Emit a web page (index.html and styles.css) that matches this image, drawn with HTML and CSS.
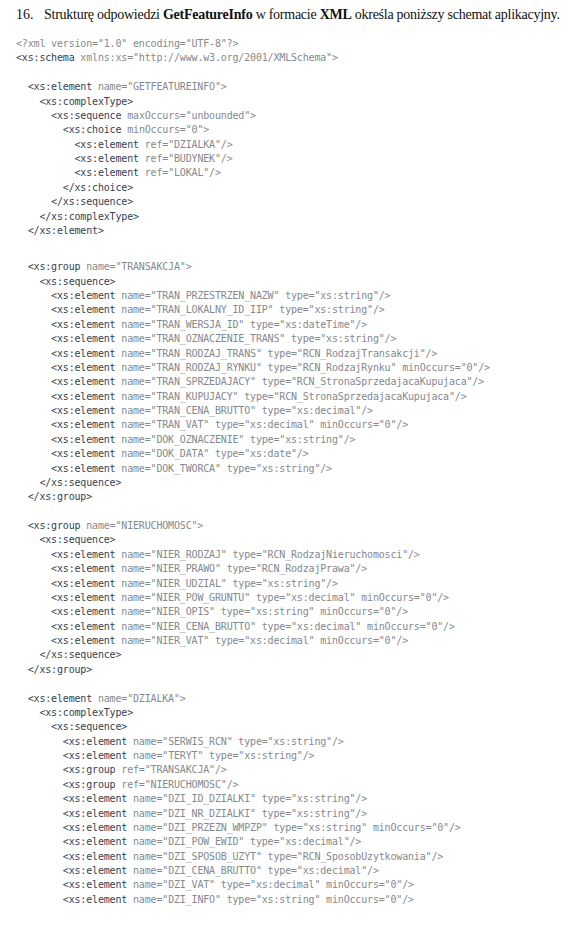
FILE: index.html
```html
<!DOCTYPE html>
<html lang="pl">
<head>
<meta charset="utf-8">
<link rel="stylesheet" href="styles.css">
</head>
<body>
<div class="page">
  <p class="item"><span class="num">16.</span><span class="text">Strukturę odpowiedzi <b>GetFeatureInfo</b> w formacie <b>XML</b> określa poniższy schemat aplikacyjny.</span></p>

<pre class="code head"><span class="a">&lt;?xml version="1.0" encoding="UTF-8"?&gt;</span>
<span class="t">&lt;xs:schema</span><span class="a"> xmlns:xs="http://www.w3.org/2001/XMLSchema"&gt;</span>

  <span class="t">&lt;xs:element</span><span class="a"> name="GETFEATUREINFO"&gt;</span>
    <span class="t">&lt;xs:complexType&gt;</span>
      <span class="t">&lt;xs:sequence</span><span class="a"> maxOccurs="unbounded"&gt;</span>
        <span class="t">&lt;xs:choice</span><span class="a"> minOccurs="0"&gt;</span>
          <span class="t">&lt;xs:element</span><span class="a"> ref="DZIALKA"/&gt;</span>
          <span class="t">&lt;xs:element</span><span class="a"> ref="BUDYNEK"/&gt;</span>
          <span class="t">&lt;xs:element</span><span class="a"> ref="LOKAL"/&gt;</span>
        <span class="t">&lt;/xs:choice&gt;</span>
      <span class="t">&lt;/xs:sequence&gt;</span>
    <span class="t">&lt;/xs:complexType&gt;</span>
  <span class="t">&lt;/xs:element&gt;</span></pre>

<pre class="code body-block"><span class="t">  &lt;xs:group</span><span class="a"> name="TRANSAKCJA"&gt;</span>
    <span class="t">&lt;xs:sequence&gt;</span>
      <span class="t">&lt;xs:element</span><span class="a"> name="TRAN_PRZESTRZEN_NAZW" type="xs:string"/&gt;</span>
      <span class="t">&lt;xs:element</span><span class="a"> name="TRAN_LOKALNY_ID_IIP" type="xs:string"/&gt;</span>
      <span class="t">&lt;xs:element</span><span class="a"> name="TRAN_WERSJA_ID" type="xs:dateTime"/&gt;</span>
      <span class="t">&lt;xs:element</span><span class="a"> name="TRAN_OZNACZENIE_TRANS" type="xs:string"/&gt;</span>
      <span class="t">&lt;xs:element</span><span class="a"> name="TRAN_RODZAJ_TRANS" type="RCN_RodzajTransakcji"/&gt;</span>
      <span class="t">&lt;xs:element</span><span class="a"> name="TRAN_RODZAJ_RYNKU" type="RCN_RodzajRynku" minOccurs="0"/&gt;</span>
      <span class="t">&lt;xs:element</span><span class="a"> name="TRAN_SPRZEDAJACY" type="RCN_StronaSprzedajacaKupujaca"/&gt;</span>
      <span class="t">&lt;xs:element</span><span class="a"> name="TRAN_KUPUJACY" type="RCN_StronaSprzedajacaKupujaca"/&gt;</span>
      <span class="t">&lt;xs:element</span><span class="a"> name="TRAN_CENA_BRUTTO" type="xs:decimal"/&gt;</span>
      <span class="t">&lt;xs:element</span><span class="a"> name="TRAN_VAT" type="xs:decimal" minOccurs="0"/&gt;</span>
      <span class="t">&lt;xs:element</span><span class="a"> name="DOK_OZNACZENIE" type="xs:string"/&gt;</span>
      <span class="t">&lt;xs:element</span><span class="a"> name="DOK_DATA" type="xs:date"/&gt;</span>
      <span class="t">&lt;xs:element</span><span class="a"> name="DOK_TWORCA" type="xs:string"/&gt;</span>
    <span class="t">&lt;/xs:sequence&gt;</span>
  <span class="t">&lt;/xs:group&gt;</span>

  <span class="t">&lt;xs:group</span><span class="a"> name="NIERUCHOMOSC"&gt;</span>
    <span class="t">&lt;xs:sequence&gt;</span>
      <span class="t">&lt;xs:element</span><span class="a"> name="NIER_RODZAJ" type="RCN_RodzajNieruchomosci"/&gt;</span>
      <span class="t">&lt;xs:element</span><span class="a"> name="NIER_PRAWO" type="RCN_RodzajPrawa"/&gt;</span>
      <span class="t">&lt;xs:element</span><span class="a"> name="NIER_UDZIAL" type="xs:string"/&gt;</span>
      <span class="t">&lt;xs:element</span><span class="a"> name="NIER_POW_GRUNTU" type="xs:decimal" minOccurs="0"/&gt;</span>
      <span class="t">&lt;xs:element</span><span class="a"> name="NIER_OPIS" type="xs:string" minOccurs="0"/&gt;</span>
      <span class="t">&lt;xs:element</span><span class="a"> name="NIER_CENA_BRUTTO" type="xs:decimal" minOccurs="0"/&gt;</span>
      <span class="t">&lt;xs:element</span><span class="a"> name="NIER_VAT" type="xs:decimal" minOccurs="0"/&gt;</span>
    <span class="t">&lt;/xs:sequence&gt;</span>
  <span class="t">&lt;/xs:group&gt;</span>

  <span class="t">&lt;xs:element</span><span class="a"> name="DZIALKA"&gt;</span>
    <span class="t">&lt;xs:complexType&gt;</span>
      <span class="t">&lt;xs:sequence&gt;</span>
        <span class="t">&lt;xs:element</span><span class="a"> name="SERWIS_RCN" type="xs:string"/&gt;</span>
        <span class="t">&lt;xs:element</span><span class="a"> name="TERYT" type="xs:string"/&gt;</span>
        <span class="t">&lt;xs:group</span><span class="a"> ref="TRANSAKCJA"/&gt;</span>
        <span class="t">&lt;xs:group</span><span class="a"> ref="NIERUCHOMOSC"/&gt;</span>
        <span class="t">&lt;xs:element</span><span class="a"> name="DZI_ID_DZIALKI" type="xs:string"/&gt;</span>
        <span class="t">&lt;xs:element</span><span class="a"> name="DZI_NR_DZIALKI" type="xs:string"/&gt;</span>
        <span class="t">&lt;xs:element</span><span class="a"> name="DZI_PRZEZN_WMPZP" type="xs:string" minOccurs="0"/&gt;</span>
        <span class="t">&lt;xs:element</span><span class="a"> name="DZI_POW_EWID" type="xs:decimal"/&gt;</span>
        <span class="t">&lt;xs:element</span><span class="a"> name="DZI_SPOSOB_UZYT" type="RCN_SposobUzytkowania"/&gt;</span>
        <span class="t">&lt;xs:element</span><span class="a"> name="DZI_CENA_BRUTTO" type="xs:decimal"/&gt;</span>
        <span class="t">&lt;xs:element</span><span class="a"> name="DZI_VAT" type="xs:decimal" minOccurs="0"/&gt;</span>
        <span class="t">&lt;xs:element</span><span class="a"> name="DZI_INFO" type="xs:string" minOccurs="0"/&gt;</span></pre>
</div>
</body>
</html>
```

FILE: styles.css
```css
html, body {
  margin: 0;
  padding: 0;
  background: #ffffff;
}

.page {
  padding: 6px 0 0 16px;
}

.item {
  display: flex;
  margin: 0;
  font-family: "Liberation Serif", "Times New Roman", serif;
  font-size: 14px;
  letter-spacing: -0.26px;
  line-height: 18px;
  color: #111;
  white-space: nowrap;
}

.item .num {
  width: 28px;
  flex: none;
  letter-spacing: 0;
}

.item b {
  font-weight: bold;
}

.code {
  margin: 0;
  font-family: "DejaVu Sans Mono", monospace;
  font-size: 10px;
  letter-spacing: -0.17px;
  line-height: 14.375px;
  color: #36424f;
}

.code.head {
  margin-top: 13px;
}

.code.body-block {
  margin-top: 22px;
}

.t {
  color: #36424f;
}

.a {
  color: #84898e;
}
```
